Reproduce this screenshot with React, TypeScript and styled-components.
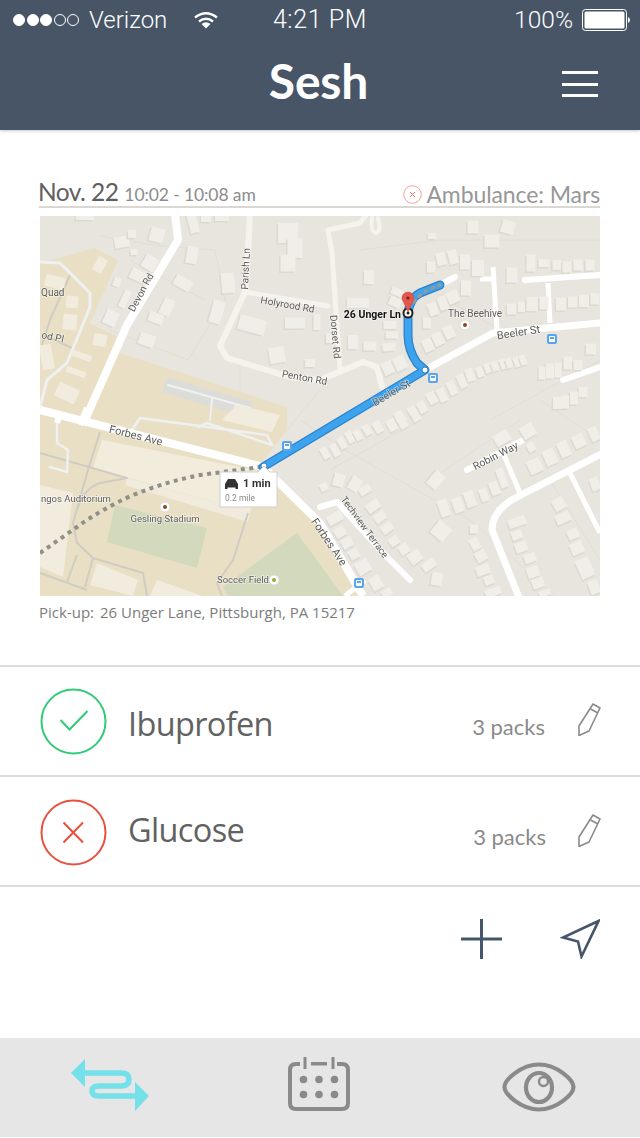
import React from "react";
import styled, { createGlobalStyle } from "styled-components";

const Global = createGlobalStyle`
  html, body { margin: 0; padding: 0; background: #fff; }
  * { box-sizing: border-box; }
`;

const Page = styled.div`
  width: 640px; height: 1138px; display: flex; flex-direction: column; background: #fff;
  overflow: hidden; font-family: "Open Sans", "Liberation Sans", sans-serif;
`;
const Header = styled.header`
  height: 130px; background: #475567; color: #fff; box-shadow: 0 1px 3px rgba(0,0,0,.22);
  display: flex; flex-direction: column; flex: none;
`;
const StatusBar = styled.div`
  height: 40px; padding: 0 10px 0 13px; display: grid; grid-template-columns: 1fr auto 1fr; align-items: center;
  font: 300 24px/40px Roboto, "Liberation Sans", sans-serif;
`;
const StatusLeft = styled.div`display: flex; align-items: center;`;
const StatusRight = styled.div`display: flex; align-items: center; justify-content: flex-end; gap: 9px; font-size: 24.5px;`;
const Carrier = styled.span`margin: 0 27px 0 8px; letter-spacing: 0;`;
const Clock = styled.span`font-size: 25px; letter-spacing: .6px; margin-left: -3px;`;
const NavBar = styled.div`
  flex: 1; position: relative; display: flex; align-items: center; justify-content: center; padding-bottom: 8px;
`;
const Title = styled.h1`
  margin: 0 3px 0 0; font: 700 48px/1 Lato, sans-serif; letter-spacing: -.2px;
`;
const Burger = styled.div`
  position: absolute; right: 42px; top: 31px; width: 36px; height: 26px; display: flex; flex-direction: column; justify-content: space-between;
  span { display: block; height: 3px; background: #fff; }
`;
const Trip = styled.section`
  padding: 50px 40px 0 39px; height: 535px; flex: none;
`;
const TripHead = styled.div`
  display: flex; align-items: flex-end; justify-content: space-between; height: 28px; border-bottom: 2px solid #dbd8d4;
  margin-bottom: 8px; white-space: nowrap; line-height: 24px;
`;
const TripWhen = styled.div`display: flex; align-items: baseline; gap: 6px; margin-left: -1px; transform: translateY(3px);`;
const TripDate = styled.span`font: 400 24.5px/28px Lato, sans-serif; color: #5f5f5f; letter-spacing: -.55px;`;
const TripTime = styled.span`font: 400 17.5px/28px Lato, sans-serif; color: #8c8c8c; letter-spacing: -.1px;`;
const Crew = styled.div`display: flex; align-items: center; gap: 4px; font: 400 23px/28px Lato, sans-serif; color: #979797; letter-spacing: -.1px; transform: translateY(2px);`;
const MapFrame = styled.div`
  margin-left: 1px; width: 560px; height: 380px; overflow: hidden; svg { display: block; filter: blur(.45px); }
`;
const Pickup = styled.p`
  margin: 6px 0 0; font: 400 15px/20px "Open Sans", sans-serif; color: #7c7c7c; white-space: nowrap;
  b { font-weight: 400; margin-right: 6px; }
`;
const Row = styled.div<{ $h: number }>`
  height: ${p => p.$h}px; flex: none; border-top: 2px solid #dcdcdc; padding: 0 39px 0 40px; display: flex; align-items: center;
`;
const StatusRing = styled.svg<{ $lift: number }>`width: 67px; height: 67px; flex: none; transform: translateY(${p => p.$lift}px);`;
const Drug = styled.span<{ $lift: number }>`
  margin-left: 21px; flex: 1; font: 400 32.5px/40px "Open Sans", sans-serif; letter-spacing: -.65px; color: #626262;
  transform: translateY(${p => p.$lift}px);
`;
const Qty = styled.span<{ $lift: number; $dx: number }>`
  font: 400 22px/30px Lato, sans-serif; color: #8a8a8a; margin-right: 32px; transform: translate(${p => p.$dx}px, ${p => p.$lift}px);
`;
const Edit = styled.svg<{ $lift: number }>`width: 24px; height: 34px; flex: none; transform: translateY(${p => p.$lift}px);`;
const Actions = styled.div`
  flex: 1; border-top: 2px solid #dcdcdc; display: flex; justify-content: flex-end; align-items: flex-start; padding: 32px 40px 0 0; gap: 58px;
`;
const TabBar = styled.nav`
  height: 99px; flex: none; margin-bottom: 1px; background: #e6e6e6; position: relative; display: grid; grid-template-columns: 224px 193px 1fr; align-items: start;
`;
const Tab = styled.div<{ $pl: number; $pt: number }>`padding: ${p => p.$pt}px 0 0 ${p => p.$pl}px; svg { display: block; }`;

const Dot = styled.i<{ $on?: boolean }>`
  width: 12px; height: 12px; border-radius: 50%; margin-right: 1.6px; flex: none;
  background: ${p => (p.$on ? "#fff" : "transparent")}; border: 1px solid #fff;
`;

type B = [number, number, number, number, number?];
const buildings: B[] = [
  [122,242,15,11,-10],[132,234,8,8,0],[157,235,14,14,15],[134,252,7,6,0],[150,263,14,14,30],[139,276,18,11,25],[117,282,7,9,20],[125,299,7,18,25],[111,318,13,15,25],[167,307,11,17,25],[156,318,15,10,20],[147,340,16,12,20],[183,283,18,11,30],[192,255,11,17,10],[193,223,9,20,-15],[228,283,13,20,-5],[217,312,12,23,15],[288,233,20,20,0],[295,248,15,20,0],[288,263,15,17,0],[252,325,27,15,15],[295,323,20,11,0],[277,355,16,16,-10],[310,363,10,8,0],[317,322,7,16,0],[85,216,18,8,0],[222,217,14,8,0],[206,218,10,8,0],
  [369,277,10,14,0],[358,303,22,10,0],[397,292,12,7,25],[395,302,12,9,25],[433,309,9,13,-20],[453,297,12,12,-25],[443,303,9,14,-20],[466,288,10,15,0],[465,262,10,15,0],[441,259,9,13,-15],[453,257,9,14,-15],[431,267,8,11,0],[432,236,8,6,0],[473,227,11,13,0],[492,241,15,13,0],[508,227,13,13,15],[478,268,12,16,0],[512,275,11,15,0],[531,263,9,17,0],[544,263,11,8,0],[557,265,9,10,0],[567,267,9,11,0],[578,265,9,11,0],[590,265,9,11,0],
  [512,309,10,11,0],[522,307,8,10,0],[532,304,11,14,0],[544,303,9,13,0],[561,304,10,13,0],[573,302,10,11,0],[584,301,10,12,0],[595,299,9,11,0],[427,323,8,11,0],[390,325,13,8,0],[392,335,12,7,0],[389,347,13,8,-5],[370,346,13,9,0],[353,342,10,14,0],[428,345,10,13,-25],[438,339,10,13,-25],[449,332,10,13,-25],[388,368,11,13,-25],[400,363,12,14,-25],[330,338,8,10,0],
  [442,395,8,14,-25],[452,388,8,14,-25],[462,381,8,14,-25],[470,375,8,13,-20],[480,372,7,10,-20],[488,368,7,10,-20],[495,366,7,10,-20],[503,364,6,10,-20],[509,363,6,10,-20],[517,362,6,10,-20],[523,360,6,10,-20],[432,398,9,12,-30],[422,407,8,12,-30],[413,412,8,12,-30],[400,417,9,12,-30],
  [591,349,10,11,0],[568,363,9,13,0],[578,365,9,10,0],[558,370,7,15,0],[550,371,8,15,0],[542,373,7,13,0],[583,392,9,10,0],[574,398,8,13,0],[565,402,8,13,0],[557,403,8,12,0],
  [325,453,7,12,-30],[335,450,7,13,-30],[342,443,7,12,-30],[350,437,7,12,-30],[358,435,7,11,-30],[367,430,7,11,-30],[378,427,8,12,-30],[392,425,9,12,-30],[402,422,8,13,-30],[415,415,8,13,-30],
  [339,480,11,13,15],[355,484,11,14,30],[365,490,12,8,-30],[324,487,8,8,-30],[373,506,14,10,-35],[380,517,12,9,-35],[387,528,12,9,-35],[394,541,10,9,-35],[404,549,10,10,-35],[415,557,13,12,-35],[429,565,14,9,-35],[437,579,11,13,10],[335,518,16,10,-30],[340,532,11,10,-30],[347,543,11,10,-30],[354,554,10,10,-30],[363,567,14,13,-30],[376,583,11,14,-30],[387,593,10,8,-30],
  [436,480,12,17,40],[444,508,10,17,-20],[458,505,10,15,-20],[470,499,10,16,-20],[484,495,8,13,-20],[495,488,10,14,-20],[502,478,8,20,-20],[441,531,16,16,40],[474,529,8,9,0],[475,544,9,12,-30],[481,556,11,11,-30],[483,570,14,10,-20],[489,580,10,9,-20],[493,592,16,8,-20],
  [502,438,16,12,-30],[528,431,14,13,-30],[531,447,8,9,-30],[535,466,14,14,-25],[550,457,12,16,-25],[564,449,11,16,-25],[579,441,12,13,-25],[594,434,9,14,-25],
  [517,522,18,9,-20],[517,535,11,9,-20],[521,547,12,10,-20],[530,558,12,9,-20],[533,572,12,11,-20],[538,583,12,10,-20],[545,593,12,6,-20],[559,504,12,12,-30],[563,518,15,10,-25],[573,534,11,10,-25],[577,548,13,12,-25],[585,568,14,20,-25],[594,587,10,14,-20],[595,484,9,13,-20],
];
const campus: B[] = [
  [100,265,10,15,30],[55,282,20,12,15],[72,302,12,12,5],[70,322,14,16,5],[100,340,13,12,10],[82,356,20,6,20],[76,372,20,6,20],[67,393,22,15,25],[47,357,12,25,-10],[247,412,27,9,12],
];

type L = { x: number; y: number; t: string; r?: number; s?: number; w?: number; a?: "start" | "middle" | "end"; c?: string };
const labels: L[] = [
  { x: 144, y: 294, t: "Devon Rd", r: -62 },{ x: 249, y: 269, t: "Parish Ln", r: -87 },{ x: 287, y: 308, t: "Holyrood Rd", r: 10 },
  { x: 304, y: 381, t: "Penton Rd", r: 10 },{ x: 332, y: 337, t: "Dorset Rd", r: 85 },{ x: 401, y: 318, t: "26 Unger Ln", a: "end", w: 700, s: 10.5, c: "#111" },
  { x: 475, y: 317, t: "The Beehive" },{ x: 519, y: 336, t: "Beeler St", r: -9, s: 11 },{ x: 393, y: 396, t: "Beeler St", r: -30, s: 10.5 },
  { x: 135, y: 439, t: "Forbes Ave", r: 14, s: 11 },{ x: 326, y: 544, t: "Forbes Ave", r: 56, s: 11 },{ x: 362, y: 529, t: "Techview Terrace", r: 54, s: 9.5 },
  { x: 497, y: 459, t: "Robin Way", r: -27, s: 10.5 },{ x: 41, y: 296, t: "Quad", s: 10, a: "start" },{ x: 41, y: 338, t: "od Pl", r: 12, s: 10, a: "start" },
  { x: 41, y: 502, t: "ngos Auditorium", s: 9.5, a: "start" },{ x: 165, y: 522, t: "Gesling Stadium", s: 9.5 },{ x: 243, y: 583, t: "Soccer Field", s: 9.5 },
];

const Poi = ({ x, y, c = "#8b4a21" }: { x: number; y: number; c?: string }) => (
  <g><circle cx={x} cy={y} r={5} fill="#fff" stroke="#ddd" /><circle cx={x} cy={y} r={2} fill={c} /></g>
);
const Bus = ({ x, y }: { x: number; y: number }) => (
  <g>
    <rect x={x - 5} y={y - 5} width={10} height={10} rx={2} fill="#58a4ee" />
    <rect x={x - 3} y={y - 3} width={6} height={6} rx={1} fill="#fff" />
    <rect x={x - 2} y={y - 2} width={4} height={2} fill="#58a4ee" />
  </g>
);

const RouteMap = () => (
  <svg width="560" height="380" viewBox="40 216 560 380">
    <rect x="40" y="216" width="560" height="380" fill="#e8e5de" />
    <g fill="none" stroke="#e1ded6" strokeWidth="1">
      <path d="M100 236L160 246M160 246L215 250L225 300L188 360M130 260L205 300M110 330L188 360M240 360V420M320 390L287 430M300 420L345 450M420 420L330 470M345 450L470 520M490 420L600 360M540 400L600 440M430 290L500 330M360 250L440 240M440 240L600 240M430 480L520 420M470 520L560 600M550 480L600 560" />
    </g>
    <polygon points="40,263 94,248 118,260 90,323 118,337 120,353 287,407 287,430 262,462 320,523 365,596 40,596" fill="#e9dfc4" />
    <polygon points="115,505 207,528 197,568 107,542" fill="#d2d9bc" />
    <polygon points="297,533 343,596 228,596 223,587" fill="#d2d9bc" />
    <polygon points="102,440 265,472 250,512 93,468" fill="#f2ecdc" />
    <polygon points="127,478 250,512 248,522 125,485" fill="#f0ebdd" />
    <polygon points="40,485 73,493 63,577 40,567" fill="#f1ecdd" />
    <polygon points="97,563 138,580 133,596 90,585" fill="#f1ecdd" />
    <polygon points="157,580 203,596 150,596" fill="#f1ecdd" />
    <polygon points="167,377 253,402 248,418 162,392" fill="#dcdcd9" />
    <polygon points="237,405 280,415 272,432 222,420" fill="#f1ecdd" />
    <g fill="none" stroke="#cfcdc3" strokeWidth="2" strokeLinejoin="round">
      <path d="M100 432L88 470L73 523L77 543L93 558L143 573L147 596" />
      <path d="M40 453L127 478L100 483Q84 488 77 510" />
      <path d="M248 513L233 560L217 583L222 596M77 555L67 582M93 558L85 587M40 573L87 590" />
      <path d="M70 275L50 320L42 345M44 335L72 348" />
    </g>
    <g fill="none" stroke="#eef0f1" strokeLinejoin="round" strokeLinecap="round">
      <path strokeWidth="3" d="M40 262L60 263L90 293L90 307L67 363L47 380L40 407" />
      <path strokeWidth="2.5" d="M57 423V443L68 450L67 472L50 467M132 430L140 418L267 435L272 445L207 423L198 427" />
      <path strokeWidth="2" d="M168 385L250 408M212 399L210 420" />
    </g>
    <g fill="none" stroke="#fff" strokeLinejoin="round" strokeLinecap="round">
      <path strokeWidth="8" strokeLinecap="butt" d="M175 214L178 240L127 325L85 420" />
      <path strokeWidth="8" strokeLinecap="butt" d="M40 410L263 467L320 523L363 596" />
      <g stroke="#f5f3ee">
        <path strokeWidth="6" d="M250 214L248 253L245 292L220 346L227 358L290 377L320 380L363 362L377 367L382 387" />
        <path strokeWidth="5" d="M245 292L328 306M328 230L332 253L340 368M328 230L360 223L367 214" />
        <path strokeWidth="4" d="M372 218Q370 232 376 233Q382 232 378 218" />
      </g>
      <path strokeWidth="7" d="M425 370L493 333L600 323" />
      <path strokeWidth="6" d="M440 285L455 277M525 280L600 275M563 380L600 367M467 470L523 440" />
      <path strokeWidth="5" strokeLinecap="butt" d="M548 283L550 323M493 267L497 330M480 279L495 279M503 453L520 493M570 473L600 533" />
      <path strokeWidth="7" strokeLinecap="butt" d="M605 452L517 497Q492 510 492 530L520 600" />
      <path strokeWidth="6" d="M320 507L337 502L353 520L387 557L410 580" />
      <path strokeWidth="6" strokeLinecap="butt" d="M87 408L80 425M57 423L60 412" />
      <path strokeWidth="5" strokeLinecap="butt" d="M345 596L365 580" />
    </g>
    {campus.map(([x, y, w, h, r = 0], i) => (
      <rect key={i} x={x - w / 2} y={y - h / 2} width={w} height={h} fill="#f1ecdd" transform={`rotate(${r} ${x} ${y})`} />
    ))}
    {buildings.map(([x, y, w, h, r = 0], i) => (
      <g key={i} transform={`rotate(${r} ${x} ${y})`}>
        <rect x={x - w / 2 - 1.5} y={y - h / 2 + 1.5} width={w} height={h} fill="#dcd9d1" />
        <rect x={x - w / 2} y={y - h / 2} width={w} height={h} fill="#f0eee8" />
      </g>
    ))}
    <path d="M40 553L77 527Q100 510 133 495Q165 482 200 475L260 467" fill="none" stroke="#8f8f8b" strokeWidth="4" strokeDasharray="4 4.5" />
    <g fill="none" strokeLinecap="round" strokeLinejoin="round">
      <path d="M263 467L425 370L417 363Q408 350 408 335V313Q410 298 420 293L440 285" stroke="#2f80c8" strokeWidth="9" />
      <path d="M263 467L425 370L417 363Q408 350 408 335V313Q410 298 420 293L440 285" stroke="#3ca4ee" strokeWidth="6.5" />
      <path d="M414 302Q420 292 440 285" stroke="#9a9a94" strokeWidth="3" strokeDasharray="2.5 5" />
    </g>
    <circle cx="425" cy="370" r="3" fill="#fff" stroke="#2f80c8" />
    <circle cx="264" cy="466" r="3" fill="#fff" stroke="#2f80c8" />
    <Bus x={552} y={339} /><Bus x={433} y={378} /><Bus x={287} y={446} /><Bus x={359} y={583} />
    <Poi x={465} y={325} /><Poi x={165} y={507} /><Poi x={274} y={580} c="#8db33a" />
    {labels.map((l, i) => (
      <text key={i} x={l.x} y={l.y} textAnchor={l.a ?? "middle"} fontFamily="Roboto, sans-serif" fontSize={l.s ?? 10} fontWeight={l.w ?? 400}
        fill={l.c ?? "#5b5b58"} stroke="#fff" strokeOpacity=".55" strokeWidth="1.5" paintOrder="stroke"
        transform={l.r ? `rotate(${l.r} ${l.x} ${l.y})` : undefined}>{l.t}</text>
    ))}
    <circle cx="408" cy="313" r="4.5" fill="#fff" stroke="#222" strokeWidth="2" />
    <circle cx="408" cy="313" r="1.5" fill="#222" />
    <path d="M408 312L403.5 302A6 6 0 1 1 412.5 302Z" fill="#e4574f" stroke="#c4423c" strokeWidth=".5" />
    <circle cx="408" cy="298" r="1.6" fill="#7a1f1c" />
    <path d="M220 472H258L264 466L270 472H277V507H220Z" fill="#fff" stroke="#cfcfcf" />
    <path d="M225 489V484L228 479H235L238 484V489H235.5V487.5H227.5V489Z" fill="#333" />
    <text x="243" y="487" fontFamily="Roboto, sans-serif" fontSize="11" fontWeight="700" fill="#333">1 min</text>
    <text x="225" y="501" fontFamily="Roboto, sans-serif" fontSize="8.5" fill="#888">0.2 mile</text>
  </svg>
);

const Pencil = ({ lift }: { lift: number }) => (
  <Edit $lift={lift} viewBox="0 0 24 34" fill="none" stroke="#8a8a8a" strokeWidth="1.6" strokeLinejoin="round">
    <path d="M16 2L23 6L12 29L2 33.5L2 24Z" />
    <path d="M13.5 7L21 11" />
  </Edit>
);

export default function App() {
  return (
    <Page>
      <Global />
      <Header>
        <StatusBar>
          <StatusLeft>
            <Dot $on /><Dot $on /><Dot $on /><Dot /><Dot />
            <Carrier>Verizon</Carrier>
            <svg width="24" height="18" viewBox="0 0 24 18" fill="none" stroke="#fff" strokeWidth="2.4">
              <path d="M1 6.5Q12 -2 23 6.5M5 10.5Q12 5 19 10.5" />
              <path d="M12 17.5L7.5 13Q12 9.5 16.5 13Z" fill="#fff" stroke="none" />
            </svg>
          </StatusLeft>
          <Clock>4:21 PM</Clock>
          <StatusRight>
            <span>100%</span>
            <svg width="48" height="22" viewBox="0 0 48 22">
              <rect x=".5" y=".5" width="44" height="21" rx="3" fill="none" stroke="#fff" />
              <rect x="2.5" y="2.5" width="40" height="17" rx="1.5" fill="#fff" />
              <path d="M46 8Q48 9 48 11Q48 13 46 14Z" fill="#fff" />
            </svg>
          </StatusRight>
        </StatusBar>
        <NavBar>
          <Title>Sesh</Title>
          <Burger><span /><span /><span /></Burger>
        </NavBar>
      </Header>
      <Trip>
        <TripHead>
          <TripWhen>
            <TripDate>Nov. 22</TripDate>
            <TripTime>10:02 - 10:08 am</TripTime>
          </TripWhen>
          <Crew>
            <svg width="19" height="19" viewBox="0 0 19 19" fill="none" stroke="#f0a298">
              <circle cx="9.5" cy="9.5" r="8.8" />
              <path d="M7 7L12 12M12 7L7 12" stroke="#e8766a" />
            </svg>
            Ambulance: Mars
          </Crew>
        </TripHead>
        <MapFrame><RouteMap /></MapFrame>
        <Pickup><b>Pick-up:</b>26 Unger Lane, Pittsburgh, PA 15217</Pickup>
      </Trip>
      <Row $h={110}>
        <StatusRing $lift={0} viewBox="0 0 67 67" fill="none" stroke="#2fcb76" strokeWidth="2">
          <circle cx="33.5" cy="33.5" r="32" />
          <path d="M20.5 32L29.5 41.5L47.5 23" />
        </StatusRing>
        <Drug $lift={3}>Ibuprofen</Drug>
        <Qty $lift={6} $dx={0}>3 packs</Qty>
        <Pencil lift={-2} />
      </Row>
      <Row $h={110}>
        <StatusRing $lift={1} viewBox="0 0 67 67" fill="none" stroke="#e8503f" strokeWidth="2">
          <circle cx="33.5" cy="33.5" r="32" />
          <path d="M23.5 23.5L43 43.5M43 23.5L23.5 43.5" />
        </StatusRing>
        <Drug $lift={-1}>Glucose</Drug>
        <Qty $lift={6} $dx={1}>3 packs</Qty>
        <Pencil lift={-1} />
      </Row>
      <Actions>
        <svg width="41" height="40" viewBox="0 0 41 40" stroke="#46566a" strokeWidth="3" fill="none"><path d="M20.5 0V40M0 20H41" /></svg>
        <svg width="40" height="40" viewBox="0 0 40 40" fill="none" stroke="#46566a" strokeWidth="2.6" strokeLinejoin="miter"><path d="M38.5 2L3 18.5L18 22.5L21.5 37.5Z" /></svg>
      </Actions>
      <TabBar>
        <Tab $pl={71} $pt={21}>
          <svg width="78" height="52" viewBox="0 0 78 52" fill="#74e0ea">
            <path d="M0 14L14 0V28Z" />
            <path d="M64 23L78 37L64 52Z" />
            <path d="M12 14H50Q58 14 58 20.5Q58 27 50 27H28Q21 27 21 32Q21 37 28 37H66" fill="none" stroke="#74e0ea" strokeWidth="5.5" />
          </svg>
        </Tab>
        <Tab $pl={64} $pt={19}>
          <svg width="62" height="55" viewBox="0 0 62 55" fill="#8a8a8a">
            <path d="M12 7H8Q2 7 2 13V46Q2 52 8 52H54Q60 52 60 46V13Q60 7 54 7H49" fill="none" stroke="#8a8a8a" strokeWidth="4" />
            <path d="M15.5 0H18.5V12H15.5ZM43.5 0H46.5V12H43.5ZM23 5H39V8.5H23Z" />
            <circle cx="15.5" cy="22.5" r="3.8" /><circle cx="31" cy="22.5" r="3.8" /><circle cx="46.5" cy="22.5" r="3.8" />
            <circle cx="15.5" cy="37.5" r="3.8" /><circle cx="31" cy="37.5" r="3.8" /><circle cx="46.5" cy="37.5" r="3.8" />
          </svg>
        </Tab>
        <Tab $pl={85} $pt={24}>
          <svg width="76" height="50" viewBox="0 0 76 50" fill="none" stroke="#8a8a8a" strokeWidth="4.2">
            <path d="M2.5 25C2.5 18 19 2.5 37 2.5C55 2.5 71.5 18 71.5 25C71.5 32 55 47.5 37 47.5C19 47.5 2.5 32 2.5 25Z" />
            <ellipse cx="37" cy="25.5" rx="13" ry="14.5" />
            <circle cx="41.5" cy="19.5" r="4.5" strokeWidth="2.4" fill="#e6e6e6" />
          </svg>
        </Tab>
      </TabBar>
    </Page>
  );
}
